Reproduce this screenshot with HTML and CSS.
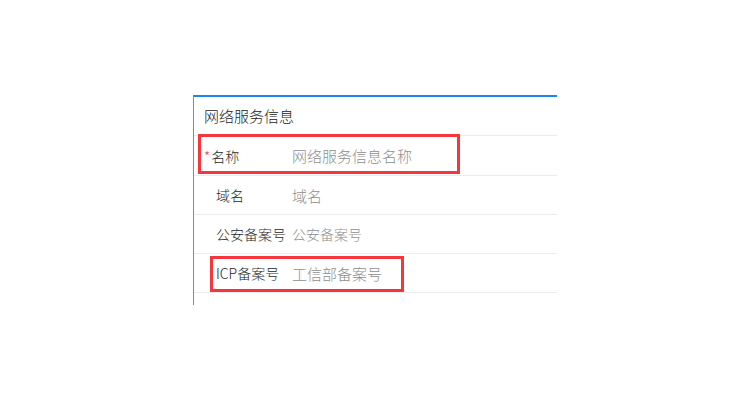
FILE: index.html
```html
<!DOCTYPE html>
<html lang="zh">
<head>
<meta charset="utf-8">
<title>网络服务信息</title>
<link rel="stylesheet" href="styles.css">
</head>
<body>
<div class="panel">
  <div class="panel-header">网络服务信息</div>
  <div class="row row-first">
    <label class="label required"><span class="star">*</span>名称</label>
    <input class="field" type="text" placeholder="网络服务信息名称">
  </div>
  <div class="row">
    <label class="label">域名</label>
    <input class="field" type="text" placeholder="域名">
  </div>
  <div class="row">
    <label class="label">公安备案号</label>
    <input class="field tight" type="text" placeholder="公安备案号">
  </div>
  <div class="row">
    <label class="label">ICP备案号</label>
    <input class="field" type="text" placeholder="工信部备案号">
  </div>
  <div class="mark mark-name"></div>
  <div class="mark mark-icp"></div>
</div>
</body>
</html>
```

FILE: styles.css
```css
html, body {
  margin: 0;
  padding: 0;
  background: #ffffff;
}

body {
  font-family: "Noto Sans CJK SC", "Noto Sans", sans-serif;
  font-size: 14px;
  font-weight: 300;
  color: #222222;
}

.panel {
  position: relative;
  margin-left: 193px;
  margin-top: 95px;
  width: 363px;
  border-top: 2px solid #1a84f0;
  border-left: 1px solid #8a8a8a;
  padding-bottom: 12px;
}

.panel-header {
  height: 38px;
  line-height: 38px;
  padding-left: 10px;
  font-size: 15px;
  color: #222222;
  border-bottom: 1px solid #ececec;
}

.row {
  display: flex;
  align-items: center;
  height: 38px;
  border-bottom: 1px solid #ececec;
}

.row-first {
  height: 39px;
}

.label {
  flex: none;
  width: 76px;
  padding-left: 22px;
  font-size: 14px;
  color: #1e1e1e;
  white-space: nowrap;
}

.label.required {
  width: 88px;
  padding-left: 10px;
}

.star {
  color: #f03c3c;
  margin-right: 1px;
}

.field {
  flex: 1;
  min-width: 0;
  border: none;
  outline: none;
  padding: 0;
  margin: 0;
  background: transparent;
  font-family: "Noto Sans CJK SC", "Noto Sans", sans-serif;
  font-size: 15px;
  font-weight: 300;
  color: #333333;
}

.field.tight {
  font-size: 14px;
}

.field::placeholder {
  color: #8e8e8e;
}

.mark {
  position: absolute;
  border: 3px solid #f5363c;
  box-sizing: border-box;
}

.mark-name {
  left: 4px;
  top: 37px;
  width: 262px;
  height: 40px;
}

.mark-icp {
  left: 16px;
  top: 159px;
  width: 194px;
  height: 36px;
}
```
